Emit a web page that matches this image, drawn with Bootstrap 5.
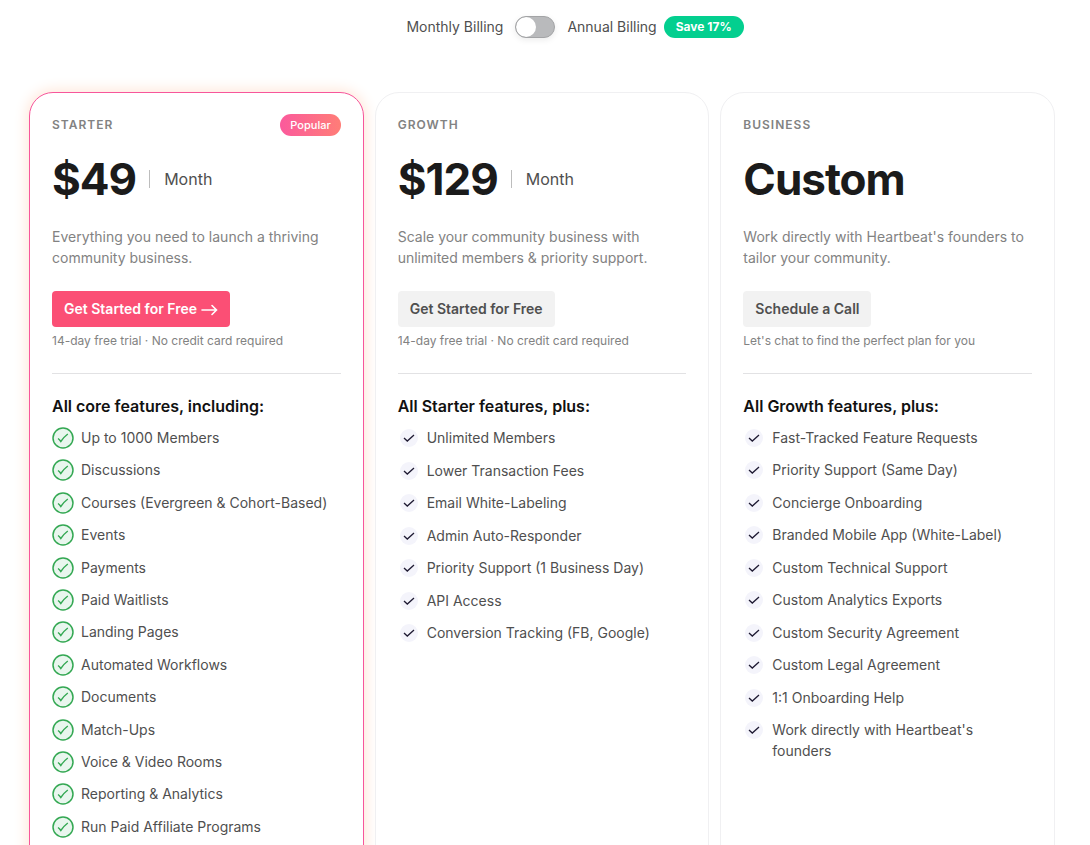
<!DOCTYPE html>
<html lang="en">
<head>
<meta charset="utf-8">
<meta name="viewport" content="width=device-width, initial-scale=1">
<title>Pricing</title>
<link href="https://cdn.jsdelivr.net/npm/bootstrap@5.3.0/dist/css/bootstrap.min.css" rel="stylesheet">
<style>
body { font-family: Inter, "Liberation Sans", sans-serif; color: #4f4f4f; font-size: 14px; line-height: 22px; }
.pricing { padding: 16px 35px 40px 29px; }
.billing { padding-left: 66px; margin-bottom: 54px; }
.billing .form-switch { min-height: 0; }
.billing-switch.form-check-input { width: 40px; height: 22px; margin: 0 12px; border: 1px solid #a3a4a6; background-color: #b9babc; box-shadow: 0 2px 6px #00000014; background-image: url("data:image/svg+xml,%3Csvg xmlns='http://www.w3.org/2000/svg' viewBox='0 0 20 20'%3E%3Ccircle cx='10' cy='10' r='10' fill='%23fff'/%3E%3C/svg%3E"); }
.save-pill { background: #03cf8f; color: #fff; font-size: 12px; font-weight: 700; padding: 0 12px; margin-left: 7px; }
.plans { display: grid; grid-template-columns: repeat(3, 1fr); gap: 11px; }
.plan { border: 1px solid #f0f0f2; border-radius: 24px; padding: 21px 22px 60px; background: #fff; }
.plan-popular { border-color: #f7569b; box-shadow: 0 0 14px 2px #ffe6d8; }
.plan-name { font-size: 12px; font-weight: 600; letter-spacing: 1px; color: #828282; margin: 0; line-height: 22px; }
.popular-pill { background: linear-gradient(90deg, #fb5a9c, #ff7d77); color: #fff; font-size: 11px; font-weight: 500; line-height: 22px; padding: 0 10px; }
.price { font-size: 44px; font-weight: 700; line-height: 54px; letter-spacing: -1px; color: #1b1b1b; }
.period { font-size: 16px; line-height: 18px; border-left: 1px solid #bdbdbd; margin-left: 13px; padding-left: 14px; }
.blurb { line-height: 21px; color: #828282; margin: 20px 0 23px; }
.plan-btn { font-size: 14px; font-weight: 600; line-height: 20px; padding: 8px 12px; border: 0; border-radius: 4px; background: #f2f2f2; color: #4f4f4f; }
.plan-btn-main { background: #fb4f75; color: #fff; }
.plan-btn svg { width: 17px; height: 12px; margin-left: 4px; }
.note { font-size: 12px; line-height: 18px; color: #828282; margin: 5px 0 23px; }
.rule { border-top: 1px solid #e2e2e4; margin: 0 0 21px; opacity: 1; }
.includes { font-size: 16px; font-weight: 600; line-height: 22px; color: #111; margin: 0 0 10px; }
.features { line-height: 21px; margin: 0; }
.features li { gap: 7px; }
.features svg { width: 22px; height: 22px; flex: none; }
.features-13 { min-height: 411px; }
.features-7 { min-height: 217px; }
.features-10 { min-height: 334px; }
@media (max-width: 767px) { .plans { grid-template-columns: 1fr; } .billing { padding-left: 0; } }
</style>
</head>
<body>
<svg class="d-none" aria-hidden="true">
  <symbol id="tick-green" viewBox="0 0 22 22"><circle cx="11" cy="11" r="10" fill="#e9f6ee" stroke="#34a853" stroke-width="1.5"/><path d="M6 11.500q1.500 1 2.800 3q3-4.500 7-7.500" fill="none" stroke="#34a853" stroke-width="1.4"/></symbol>
  <symbol id="tick-plain" viewBox="0 0 22 22"><circle cx="11" cy="11" r="9" fill="#f4f4fb"/><path d="M6 11l3.300 3 6.700-6" fill="none" stroke="#1f1b33" stroke-width="1.3"/></symbol>
</svg>
<main class="pricing">
  <div class="billing d-flex justify-content-center align-items-center">
    <label for="cycle">Monthly Billing</label>
    <div class="form-check form-switch d-flex p-0 m-0"><input class="form-check-input billing-switch" type="checkbox" role="switch" id="cycle"></div>
    <label for="cycle">Annual Billing</label>
    <span class="save-pill rounded-pill">Save 17%</span>
  </div>
  <div class="plans">
    <section class="plan plan-popular">
      <div class="d-flex justify-content-between"><h2 class="plan-name">STARTER</h2><span class="popular-pill rounded-pill">Popular</span></div>
      <div class="d-flex align-items-center mt-3"><span class="price">$49</span><span class="period">Month</span></div>
      <p class="blurb">Everything you need to launch a thriving community business.</p>
      <button type="button" class="plan-btn plan-btn-main">Get Started for Free<svg viewBox="0 0 17 12" aria-hidden="true"><path d="M1 6h14.500M11 1.500L15.500 6 11 10.500" fill="none" stroke="#fff" stroke-width="1.6" stroke-linecap="round"/></svg></button>
      <p class="note">14-day free trial · No credit card required</p>
      <hr class="rule">
      <h3 class="includes">All core features, including:</h3>
      <ul class="features features-13 list-unstyled d-flex flex-column justify-content-between">
        <li class="d-flex"><svg><use href="#tick-green"/></svg>Up to 1000 Members</li>
        <li class="d-flex"><svg><use href="#tick-green"/></svg>Discussions</li>
        <li class="d-flex"><svg><use href="#tick-green"/></svg>Courses (Evergreen &amp; Cohort-Based)</li>
        <li class="d-flex"><svg><use href="#tick-green"/></svg>Events</li>
        <li class="d-flex"><svg><use href="#tick-green"/></svg>Payments</li>
        <li class="d-flex"><svg><use href="#tick-green"/></svg>Paid Waitlists</li>
        <li class="d-flex"><svg><use href="#tick-green"/></svg>Landing Pages</li>
        <li class="d-flex"><svg><use href="#tick-green"/></svg>Automated Workflows</li>
        <li class="d-flex"><svg><use href="#tick-green"/></svg>Documents</li>
        <li class="d-flex"><svg><use href="#tick-green"/></svg>Match-Ups</li>
        <li class="d-flex"><svg><use href="#tick-green"/></svg>Voice &amp; Video Rooms</li>
        <li class="d-flex"><svg><use href="#tick-green"/></svg>Reporting &amp; Analytics</li>
        <li class="d-flex"><svg><use href="#tick-green"/></svg>Run Paid Affiliate Programs</li>
      </ul>
    </section>
    <section class="plan">
      <h2 class="plan-name">GROWTH</h2>
      <div class="d-flex align-items-center mt-3"><span class="price">$129</span><span class="period">Month</span></div>
      <p class="blurb">Scale your community business with unlimited members &amp; priority support.</p>
      <button type="button" class="plan-btn">Get Started for Free</button>
      <p class="note">14-day free trial · No credit card required</p>
      <hr class="rule">
      <h3 class="includes">All Starter features, plus:</h3>
      <ul class="features features-7 list-unstyled d-flex flex-column justify-content-between">
        <li class="d-flex"><svg><use href="#tick-plain"/></svg>Unlimited Members</li>
        <li class="d-flex"><svg><use href="#tick-plain"/></svg>Lower Transaction Fees</li>
        <li class="d-flex"><svg><use href="#tick-plain"/></svg>Email White-Labeling</li>
        <li class="d-flex"><svg><use href="#tick-plain"/></svg>Admin Auto-Responder</li>
        <li class="d-flex"><svg><use href="#tick-plain"/></svg>Priority Support (1 Business Day)</li>
        <li class="d-flex"><svg><use href="#tick-plain"/></svg>API Access</li>
        <li class="d-flex"><svg><use href="#tick-plain"/></svg>Conversion Tracking (FB, Google)</li>
      </ul>
    </section>
    <section class="plan">
      <h2 class="plan-name">BUSINESS</h2>
      <div class="d-flex align-items-center mt-3"><span class="price">Custom</span></div>
      <p class="blurb">Work directly with Heartbeat's founders to tailor your community.</p>
      <button type="button" class="plan-btn">Schedule a Call</button>
      <p class="note">Let's chat to find the perfect plan for you</p>
      <hr class="rule">
      <h3 class="includes">All Growth features, plus:</h3>
      <ul class="features features-10 list-unstyled d-flex flex-column justify-content-between">
        <li class="d-flex"><svg><use href="#tick-plain"/></svg>Fast-Tracked Feature Requests</li>
        <li class="d-flex"><svg><use href="#tick-plain"/></svg>Priority Support (Same Day)</li>
        <li class="d-flex"><svg><use href="#tick-plain"/></svg>Concierge Onboarding</li>
        <li class="d-flex"><svg><use href="#tick-plain"/></svg>Branded Mobile App (White-Label)</li>
        <li class="d-flex"><svg><use href="#tick-plain"/></svg>Custom Technical Support</li>
        <li class="d-flex"><svg><use href="#tick-plain"/></svg>Custom Analytics Exports</li>
        <li class="d-flex"><svg><use href="#tick-plain"/></svg>Custom Security Agreement</li>
        <li class="d-flex"><svg><use href="#tick-plain"/></svg>Custom Legal Agreement</li>
        <li class="d-flex"><svg><use href="#tick-plain"/></svg>1:1 Onboarding Help</li>
        <li class="d-flex"><svg><use href="#tick-plain"/></svg>Work directly with Heartbeat's founders</li>
      </ul>
    </section>
  </div>
</main>
<script src="https://cdn.jsdelivr.net/npm/bootstrap@5.3.0/dist/js/bootstrap.bundle.min.js"></script>
</body>
</html>
